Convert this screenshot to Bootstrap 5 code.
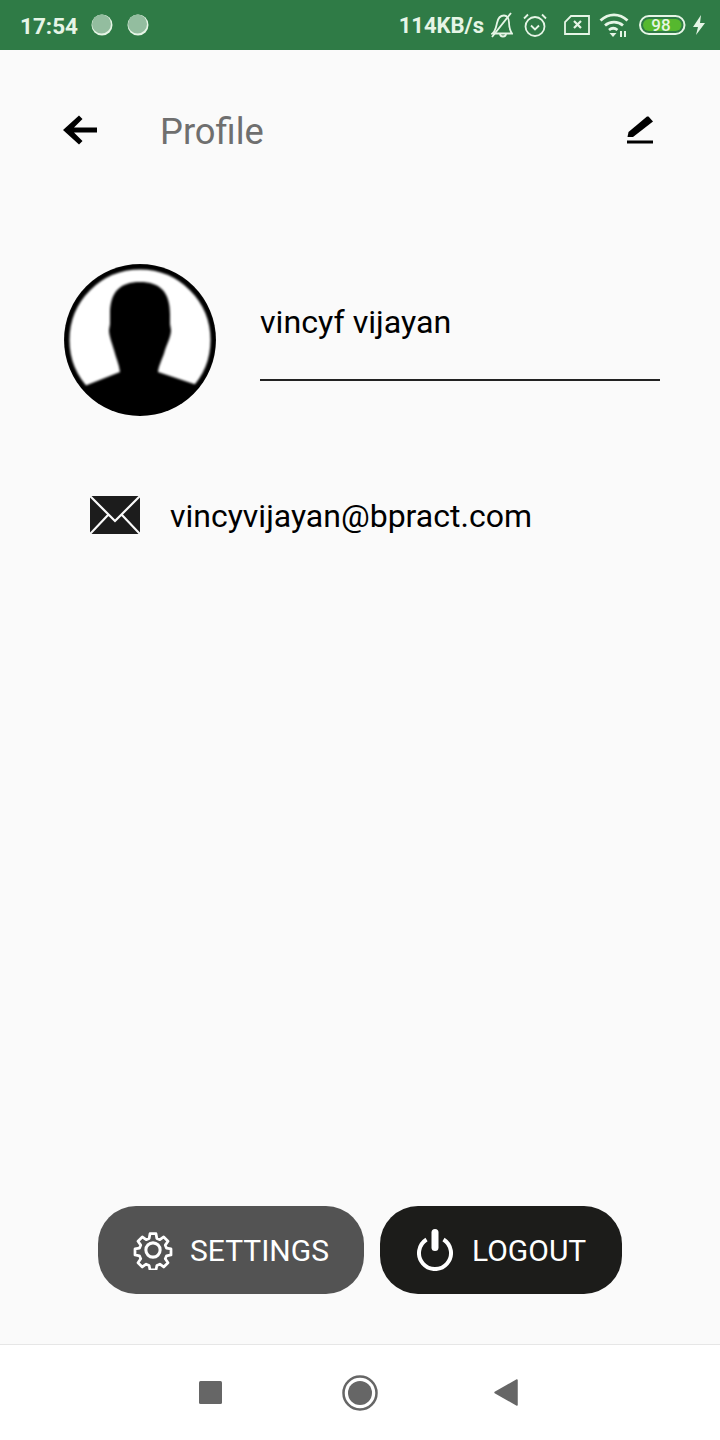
<!DOCTYPE html>
<html lang="en">
<head>
  <meta charset="UTF-8" />
  <title>Profile</title>
  <meta name="viewport" content="width=device-width, initial-scale=1" />
  <link href="https://cdn.jsdelivr.net/npm/bootstrap@5.3.2/dist/css/bootstrap.min.css" rel="stylesheet" />
  <style>
    html, body { height: 1440px; }
    body { background-color: #fafafa; font-family: Roboto, "Liberation Sans", sans-serif; color: #000; overflow: hidden; }
    .phone-page { height: 1440px; }
    .status-strip { height: 50px; flex: none; background: #2f7b46; color: #e6f5e6; padding: 0 14px 0 20px; font-weight: 700; font-size: 22.5px; line-height: 48px; }
    .status-strip > span { padding-top: 2px; }
    .status-strip svg { display: block; flex: none; }
    .dot-one { margin-left: 13px; }
    .dot-two { margin-left: 14px; }
    .speed-text { margin-left: auto; margin-right: 7px; font-size: 22px; }
    .ic-alarm { margin-left: 9px; }
    .ic-sim { margin-left: 16px; }
    .ic-wifi { margin-left: 9px; }
    .ic-batt { margin-left: 10px; }
    .ic-bolt { margin-left: 6px; }
    .top-row { height: 160px; flex: none; padding: 0 66px 0 62px; }
    .back-btn { width: 98px; }
    .page-title { font-size: 36.3px; color: #6f6f6f; line-height: 44px; margin: 3px 0 0; font-weight: 400; }
    .person-row { margin-top: 54px; padding-left: 64px; padding-right: 60px; }
    .avatar-ring { width: 152px; height: 152px; flex: none; }
    .name-box { width: 400px; margin-left: 44px; margin-top: 36px; border-bottom: 2px solid #222; height: 81px; padding-top: 2px; font-size: 32.2px; line-height: 40px; }
    .mail-row { margin-top: 78px; padding-left: 90px; font-size: 32px; line-height: 44px; }
    .mail-row span { margin-left: 30px; }
    .mail-icon { margin-bottom: 2px; }
    .action-row { margin-top: auto; gap: 16px; padding-bottom: 50px; }
    .pill-btn { height: 88px; border: 0; border-radius: 38px; color: #fff; font-size: 30px; display: flex; align-items: center; padding: 0; }
    .pill-btn span { padding-top: 1px; }
    .pill-settings { width: 266px; background: #535353; padding-left: 35px; gap: 17px; }
    .pill-logout { width: 242px; background: #1c1c1a; padding-left: 37px; gap: 19px; }
    .nav-strip { height: 96px; flex: none; background: #fff; border-top: 1px solid #e6e6e6; }
    .nav-square { margin-left: 199px; }
    .nav-circle { margin-left: 120px; }
    .nav-back { margin-left: 116px; }
  </style>
</head>
<body>
  <div class="phone-page d-flex flex-column">
    <div class="status-strip d-flex align-items-center">
      <span>17:54</span>
      <svg class="dot-one" width="22" height="22" viewBox="0 0 22 22"><circle cx="11" cy="11" r="10.500" fill="#e6f5e6"/><circle cx="10.500" cy="10" r="9.500" fill="#93bd9f"/></svg>
      <svg class="dot-two" width="22" height="22" viewBox="0 0 22 22"><circle cx="11" cy="11" r="10.500" fill="#e6f5e6"/><circle cx="10.500" cy="10" r="9.500" fill="#93bd9f"/></svg>
      <span class="speed-text">114KB/s</span>
      <svg width="22" height="26" viewBox="0 0 22 26" fill="none" stroke="#e6f5e6" stroke-width="1.800"><path d="M1.500 21.500c3-2.500 3.500-6 4.500-10.500 1-5 3.500-7.500 7-7.500 3 0 5 3 5 7 0 4 1 8 3 11z"/><path d="M9 21.500a3 3 0 0 0 6 0M1 25 20 1"/></svg>
      <svg class="ic-alarm" width="26" height="26" viewBox="0 0 26 26" fill="none" stroke="#e6f5e6" stroke-width="1.800"><circle cx="13" cy="14.500" r="9.500"/><path d="M9 13.500l4 4 4-4M2 6.500l4-4M24 6.500l-4-4"/></svg>
      <svg class="ic-sim" width="26" height="20" viewBox="0 0 26 20" fill="none" stroke="#e6f5e6" stroke-width="1.800"><path d="M7 1h18v18H1V7z"/><path d="M10 6l7 7M17 6l-7 7" stroke-width="2.200"/></svg>
      <svg class="ic-wifi" width="30" height="24" viewBox="0 0 30 24" fill="none" stroke="#e6f5e6" stroke-width="2.800"><path d="M1.500 7.500c8-7.500 19-7.500 27 0M6 12.500c5-4.500 13-4.500 18 0M10 17c2.500-2 6-2 8.500 0"/><path d="M14 24l-3.500-4h7z" fill="#e6f5e6" stroke="none"/><path d="M22 18v6M26 18v6" stroke-width="2"/></svg>
      <svg class="ic-batt" width="47" height="20" viewBox="0 0 47 20"><rect x="1" y="1" width="44.500" height="18" rx="9" fill="none" stroke="#e6f5e6" stroke-width="2"/><rect x="4" y="4" width="38.500" height="12" rx="6" fill="#56b82e"/><text x="22" y="16" text-anchor="middle" font-family="Roboto" font-size="17" font-weight="500" fill="#e6f5e6">98</text></svg>
      <svg class="ic-bolt" width="14" height="20" viewBox="0 0 14 20"><path d="M9 0 1 12h5l-2 8 9-12H8z" fill="#e6f5e6"/></svg>
    </div>

    <div class="top-row d-flex align-items-center">
      <div class="back-btn">
        <svg class="d-block" width="36" height="30" viewBox="0 0 36 30"><path d="M35 12.500H12L20.500 4 17 0.500 1 15l16 14.500L20.500 26 12 17.500h23z" fill="#000"/></svg>
      </div>
      <h1 class="page-title">Profile</h1>
      <svg class="ms-auto" width="28" height="30" viewBox="0 0 28 30"><path d="M1.500 22 2.500 17 21 1.500h1.500l4.500 5L7 22z" fill="#000"/><path d="M1 25.500h26v3H1z" fill="#000"/></svg>
    </div>

    <div class="person-row d-flex align-items-start">
      <svg class="avatar-ring" viewBox="0 0 152 152">
        <defs>
          <clipPath id="avClip"><circle cx="76" cy="76" r="76"/></clipPath>
          <filter id="soft" x="-10%" y="-10%" width="120%" height="120%"><feGaussianBlur stdDeviation="1.300"/></filter>
        </defs>
        <circle cx="76" cy="76" r="75" fill="#fff"/>
        <g clip-path="url(#avClip)">
          <g filter="url(#soft)">
            <path d="M46 50C46 28 56 18 76 18s30 10 30 32v10l1 6c0 6-3 12-6 20-2 8-6 14-7 22l39 13v40H23v-40l33-13c-1-8-4-14-6-22-2-7-5-14-5-20l1-6z" fill="#000"/>
            <path d="M4 130 23 121v31H4zM148 130l-15-9v31h15z" fill="#000"/>
            <circle cx="76" cy="76" r="74" fill="none" stroke="#000" stroke-width="7"/>
          </g>
        </g>
      </svg>
      <div class="name-box">vincyf vijayan</div>
    </div>

    <div class="mail-row d-flex align-items-center">
      <svg class="mail-icon" width="50" height="38" viewBox="0 0 50 38"><rect width="50" height="38" fill="#1c1c1c"/><path d="M0 0l25 25L50 0M0 38l18-19M50 38 32 19" fill="none" stroke="#fafafa" stroke-width="2.200"/></svg>
      <span>vincyvijayan@bpract.com</span>
    </div>

    <div class="action-row d-flex justify-content-center">
      <button class="pill-btn pill-settings" type="button">
        <svg width="40" height="40" viewBox="0 0 42 42" fill="none" stroke="#fff" stroke-width="3.200" stroke-linejoin="round"><circle cx="21" cy="21" r="7.500"/><path d="M17.500 2h7l1 5.500 3.500 1.500 4.500-3.200 5 5-3.200 4.500 1.500 3.500 5.200 1v7l-5.200 1-1.500 3.500 3.200 4.500-5 5-4.500-3.200-3.500 1.500-1 5.200h-7l-1-5.200-3.500-1.500-4.500 3.200-5-5 3.200-4.500-1.500-3.500-5.200-1v-7l5.200-1 1.500-3.500-3.200-4.500 5-5 4.500 3.200 3.500-1.500z" transform="translate(2.100 2.100) scale(.9)"/></svg>
        <span>SETTINGS</span>
      </button>
      <button class="pill-btn pill-logout" type="button">
        <svg width="36" height="42" viewBox="0 0 36 42" fill="none" stroke="#fff"><path d="M9.500 10.500a16 16 0 1 0 17 0" stroke-width="4"/><path d="M18 3.500v15" stroke-width="7" stroke-linecap="round"/></svg>
        <span>LOGOUT</span>
      </button>
    </div>

    <div class="nav-strip d-flex align-items-center">
      <svg class="nav-square" width="23" height="23" viewBox="0 0 23 23"><rect width="23" height="23" rx="1.500" fill="#666"/></svg>
      <svg class="nav-circle" width="36" height="36" viewBox="0 0 36 36"><circle cx="18" cy="18" r="16.500" fill="none" stroke="#666" stroke-width="2.500"/><circle cx="18" cy="18" r="12" fill="#666"/></svg>
      <svg class="nav-back" width="24" height="27" viewBox="0 0 24 27"><path d="M23 1v25L1 13.500z" fill="#666" stroke="#666" stroke-linejoin="round" stroke-width="1.500"/></svg>
    </div>
  </div>
  <script src="https://cdn.jsdelivr.net/npm/bootstrap@5.3.2/dist/js/bootstrap.bundle.min.js"></script>
</body>
</html>
